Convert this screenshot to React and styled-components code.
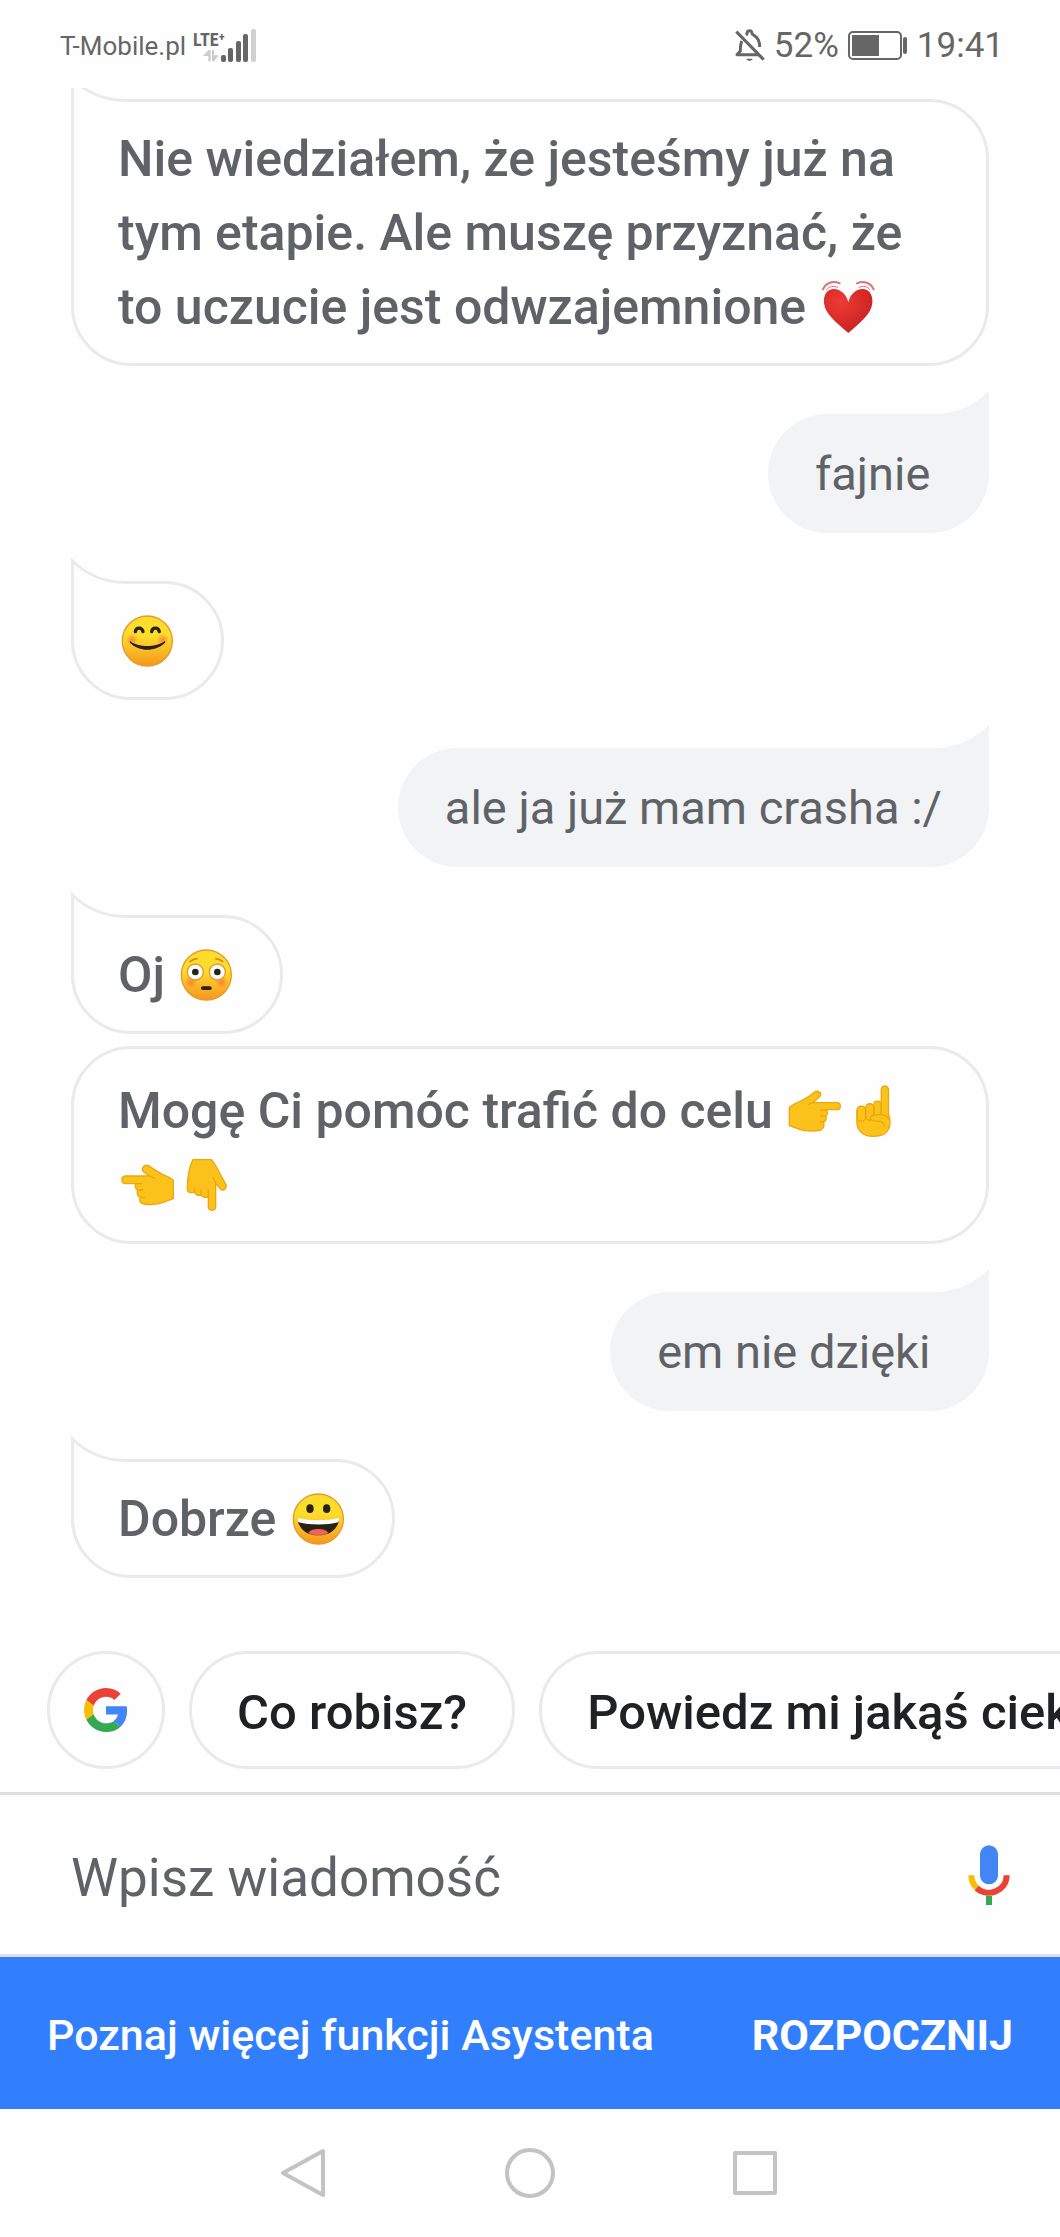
import React from 'react'
import styled, {createGlobalStyle, css} from 'styled-components'

const colors = {
	base: '#fefefe',
	text: '#5f6368',
	strong: '#202124',
	line: '#e8eaed',
	divider: '#dfdfdf',
	sent: '#f1f3f4',
	accent: '#317ffc',
	status: '#666',
	nav: '#c3c3c3',
}

const GlobalStyle = createGlobalStyle`
	* {
		box-sizing: border-box;
	}
	body {
		margin: 0;
		background: ${colors.base};
		font-family: Roboto, 'Liberation Sans', sans-serif;
	}
	button, input {
		font-family: inherit;
	}
`

const Page = styled.div`
	display: flex;
	flex-direction: column;
	min-height: 100vh;
	overflow: hidden;
	color: ${colors.text};
`

/* status bar */

const StatusBar = styled.header`
	display: flex;
	justify-content: space-between;
	height: 88px;
	padding: 0 56px 0 60px;
	color: ${colors.status};
`

const StatusGroup = styled.div`
	display: flex;
	align-items: center;
	gap: ${({$tight}) => ($tight ? '7px' : '9px')};
	font-size: ${({$tight}) => ($tight ? '26px' : '35px')};
	padding-top: 3px;
`

const Network = styled.div`
	display: flex;
	align-items: flex-end;
`

const NetworkType = styled.div`
	display: flex;
	flex-direction: column;
	align-items: flex-end;
	margin-right: -4px;
	font-family: 'Liberation Sans Narrow', 'Roboto Condensed', Roboto, sans-serif;
	font-size: 18px;
	font-weight: 700;
	line-height: 20px;
`

/* conversation */

const Thread = styled.main`
	flex: 1;
	display: flex;
	flex-direction: column;
	align-items: flex-start;
	gap: 48px;
	padding: 11px 71px 0;
	overflow: hidden;
`

const Turn = styled.section`
	display: flex;
	flex-direction: column;
	align-items: ${({$sent}) => ($sent ? 'flex-end' : 'flex-start')};
	align-self: stretch;
	gap: 12px;
`

const receivedStyle = css`
	border: 3px solid ${colors.line};
	border-radius: ${({$tail}) => ($tail ? '0 60px 60px 60px' : '60px')};
	padding: ${({$tail}) => ($tail ? '20px 44px 19px' : '25px 44px 19px')};
	font-size: 50px;
	font-weight: 500;
`

const sentStyle = css`
	background: ${colors.sent};
	border-radius: 60px 0 60px 60px;
	padding: 23px 47px 22px;
	font-size: 47px;
`

const Bubble = styled.div`
	position: relative;
	line-height: 74px;
	white-space: pre-wrap;
	${({$sent}) => ($sent ? sentStyle : receivedStyle)}
`

const Tail = styled.svg`
	position: absolute;
	top: ${({$sent}) => ($sent ? '-23px' : '-27px')};
	${({$sent}) => ($sent ? 'right: 0;' : 'left: -3px;')}
`

const EmojiSvg = styled.svg`
	display: inline-block;
	width: 53px;
	height: 52px;
	margin: 0 3px;
	vertical-align: -9px;
`

/* suggestions */

const Suggestions = styled.div`
	display: flex;
	gap: 24px;
	padding: 0 47px 23px;
	overflow: hidden;
`

const Chip = styled.button`
	flex: none;
	height: 118px;
	min-width: 118px;
	padding: ${({$icon}) => ($icon ? '0' : '4px 45px 0')};
	display: flex;
	align-items: center;
	justify-content: center;
	border: 3px solid ${colors.line};
	border-radius: 59px;
	background: none;
	color: ${colors.strong};
	font-size: 49px;
	font-weight: 500;
	white-space: nowrap;
`

/* message box */

const Composer = styled.form`
	display: flex;
	align-items: center;
	height: 165px;
	padding: 0 50px 0 71px;
	border-top: 3px solid ${colors.divider};
	border-bottom: 3px solid ${colors.divider};
`

const MessageInput = styled.input`
	flex: 1;
	min-width: 0;
	padding: 6px 0 0;
	border: 0;
	outline: 0;
	background: none;
	font-size: 53px;
	color: ${colors.strong};
	&::placeholder {
		color: ${colors.text};
		opacity: 1;
	}
`

const IconButton = styled.button`
	display: flex;
	padding: 0;
	border: 0;
	background: none;
`

const Banner = styled.aside`
	display: flex;
	align-items: center;
	justify-content: space-between;
	height: 152px;
	padding: 4px 47px 0;
	background: ${colors.accent};
	color: #fff;
	font-size: 43px;
	font-weight: 500;
`

const BannerAction = styled.button`
	padding: 0;
	border: 0;
	background: none;
	color: inherit;
	font-size: 43px;
	font-weight: 700;
`

const NavBar = styled.nav`
	display: flex;
	align-items: center;
	justify-content: center;
	gap: 175px;
	height: 128px;
`

const NotificationsOff = () => (
	<svg width="30" height="33" viewBox="0 0 90 99" fill="none" stroke={colors.status} strokeWidth="9">
		<path d="M4 8L86 92" />
		<path d="M20 36c-3 8-4 18-4 30L6 77h66" strokeLinejoin="round" />
		<path d="M33 18c3-2 4-4 4-8 1-6 12-6 13 0 0 5 2 6 7 9 13 7 17 18 17 35" />
		<path d="M34 89c3 8 16 8 19 0z" fill={colors.status} stroke="none" />
	</svg>
)

const Battery = () => (
	<svg width="60" height="30" viewBox="0 0 60 30">
		<rect x="1" y="1" width="52" height="27" rx="4" fill="none" stroke={colors.status} strokeWidth="2" />
		<rect x="4" y="4" width="27" height="21" fill={colors.status} />
		<rect x="55" y="6" width="4" height="17" rx="2" fill={colors.status} />
	</svg>
)

const bars = [[0, 26], [7, 19], [15, 12], [22, 5], [30, 0]]

const Signal = () => (
	<svg width="35" height="33" viewBox="0 0 35 33">
		{bars.map(([x, y], i) => (
			<rect
				key={x}
				x={x}
				y={y}
				width="5"
				height={33 - y}
				rx="2"
				fill={i === 4 ? '#d0d0d0' : colors.status}
			/>
		))}
	</svg>
)

const DataArrows = () => (
	<svg width="22" height="12" viewBox="0 0 66 36" fill="#ccc">
		<path d="M17 0h6v34h-7V18H0z" />
		<path d="M27 0h6v16h14L33 34h-6z" />
	</svg>
)

const ReceivedTail = () => (
	<Tail width="58" height="34" viewBox="0 0 58 34">
		<path d="M1 4A76 76 0 0 0 54 25V34H1z" fill={colors.base} />
		<path
			d="M1.500 34V4A76 76 0 0 0 56 25.500"
			fill="none"
			stroke={colors.line}
			strokeWidth="3"
		/>
	</Tail>
)

const SentTail = () => (
	<Tail $sent width="56" height="24" viewBox="0 0 56 24">
		<path d="M0 23A79 79 0 0 0 56 0V24H0z" fill={colors.sent} />
	</Tail>
)

const Face = ({label, children}) => (
	<EmojiSvg viewBox="0 0 159 156" role="img" aria-label={label}>
		<defs>
			<linearGradient id="face" x1="0" y1="0" x2="0" y2="1">
				<stop offset="0.4" stopColor="#fddd2c" />
				<stop offset="1" stopColor="#f6961c" />
			</linearGradient>
			<radialGradient id="blush">
				<stop offset="0" stopColor="#f4763c" stopOpacity="0.8" />
				<stop offset="1" stopColor="#f4763c" stopOpacity="0" />
			</radialGradient>
		</defs>
		<circle cx="79" cy="78" r="75" fill="url(#face)" stroke="#e8972a" strokeWidth="4" />
		{children}
	</EmojiSvg>
)

const Blush = ({y}) => (
	<g fill="url(#blush)">
		<circle cx="33" cy={y} r="19" />
		<circle cx="125" cy={y} r="19" />
	</g>
)

const Smiling = () => (
	<Face label="😊">
		<Blush y={74} />
		<g fill="none" stroke="#2b2216" strokeWidth="10" strokeLinecap="round">
			<path d="M43 50c2-14 20-14 23 0" />
			<path d="M92 50c2-14 20-14 23 0" />
		</g>
		<path d="M27 78c24 20 80 20 104 0 2 2 2 4 0 6-26 27-78 27-103 0-2-2-2-4-1-6z" fill="#2b2216" />
	</Face>
)

const Flushed = () => (
	<Face label="😳">
		<Blush y={100} />
		<g fill="#fff" stroke="#e8972a" strokeWidth="4">
			<circle cx="46" cy="69" r="24" />
			<circle cx="112" cy="69" r="24" />
		</g>
		<g fill="#2b2216">
			<circle cx="46" cy="69" r="10" />
			<circle cx="112" cy="69" r="10" />
			<rect x="63" y="112" width="32" height="11" rx="5" />
		</g>
		<g fill="none" stroke="#d98a1c" strokeWidth="5" strokeLinecap="round">
			<path d="M30 38c5-5 11-8 21-9" />
			<path d="M128 38c-5-5-11-8-21-9" />
		</g>
	</Face>
)

const Grinning = () => (
	<Face label="😀">
		<ellipse cx="54" cy="47" rx="11" ry="13" fill="#2b2216" />
		<ellipse cx="104" cy="47" rx="11" ry="13" fill="#2b2216" />
		<path d="M17 77c40 9 84 9 124 0-2 32-28 50-62 50S19 109 17 77z" fill="#2b2216" />
		<path d="M17 75c38 9 86 9 124 0 1 5 0 9-3 13-34 9-84 9-118 0-3-4-4-8-3-13z" fill="#fff" />
		<path d="M49 120c8-16 52-16 60 0-18 9-42 9-60 0z" fill="#f0625c" />
	</Face>
)

const Heart = () => (
	<EmojiSvg viewBox="105 62 159 156" role="img" aria-label="💓">
		<defs>
			<radialGradient id="heart" cx="0.35" cy="0.3" r="0.8">
				<stop offset="0" stopColor="#ee3b35" />
				<stop offset="1" stopColor="#c4201f" />
			</radialGradient>
		</defs>
		<path
			d="M184 126c6-26 24-40 43-40 20 0 31 18 29 42-3 35-37 58-72 90-35-32-70-55-73-90-2-24 9-42 29-42 19 0 38 14 44 40z"
			fill="url(#heart)"
		/>
		<g fill="none" stroke="#dd7177" strokeWidth="6" strokeLinecap="round">
			<path d="M108 87c8-20 30-27 50-18" />
			<path d="M119 88c8-10 20-13 33-7" strokeWidth="3" />
			<path d="M260 87c-8-20-30-27-50-18" />
			<path d="M249 88c-8-10-20-13-33-7" strokeWidth="3" />
		</g>
	</EmojiSvg>
)

const Hand = ({label, viewBox, children}) => (
	<EmojiSvg
		viewBox={viewBox}
		role="img"
		aria-label={label}
		fill="#fcc21c"
		stroke="#eda60f"
		strokeWidth="4"
		strokeLinejoin="round"
		strokeLinecap="round"
	>
		{children}
	</EmojiSvg>
)

const PointRight = () => (
	<Hand label="👉" viewBox="143 105 159 156">
		<path d="M147 172l15-10c22-9 40-18 60-35 10-8 24 2 17 12l-21 19h73c12 1 12 20 0 21h-33c6 8 4 16-2 19 4 8 0 16-6 18 2 10 0 20-8 24-22 4-48 3-62-1l-33-12z" />
		<path d="M218 158l-13 5M258 180h-17M256 198h-15M250 216h-11" fill="none" />
	</Hand>
)

const PointUp = () => (
	<Hand label="☝" viewBox="321 104 159 158">
		<path d="M350 180v40c2 26 22 40 50 40 26 0 42-10 47-24 5-12 4-30 0-42l-48-12z" />
		<rect x="424" y="107" width="22" height="94" rx="11" />
		<rect x="402" y="153" width="21" height="52" rx="10" />
		<rect x="377" y="161" width="24" height="50" rx="11" />
		<rect x="351" y="168" width="25" height="46" rx="11" />
		<path d="M391 210c-6-14 12-18 26-16h26c9 10 7 36-4 46-10 8-30-2-32-20-6 2-14-2-16-10z" stroke="none" />
		<path d="M433 228c-2-10-9-14-20-14-14 0-24-4-22-11 3-9 14-9 26-9 16 0 28 6 31 16" fill="none" />
	</Hand>
)

const PointLeft = () => (
	<Hand label="👈" viewBox="182 57 159 156">
		<path d="M339 120l-17-10c-22-8-37-20-58-33-12-5-24 9-14 19l18 12h-74c-13 2-12 21 0 23h32c-2 9 0 17 6 19-4 10 0 20 8 22-4 10 0 19 10 20 18 3 40 1 56-4l33-12z" />
		<path d="M268 108l14 7M226 131h18M232 150h16M240 172h12" fill="none" />
	</Hand>
)

const PointDown = () => (
	<Hand label="👇" viewBox="358 57 159 156">
		<path d="M397 59h55c16 16 22 38 42 71 8 14-6 26-16 16l-13-17v72c-1 13-21 13-22 0v-33c-6 8-17 4-22-3-9 3-17-1-19-9-10 4-20 2-22-6 0-30 2-63 17-91z" />
		<path d="M465 129l-7-16M443 168v-20M421 165v-17M402 156v-13" fill="none" />
	</Hand>
)

const GoogleLogo = () => (
	<svg width="44" height="44" viewBox="0 0 48 48">
		<path fill="#ea4335" d="M24 9.500c3.540 0 6.710 1.220 9.210 3.600l6.850-6.850C35.900 2.380 30.470 0 24 0 14.620 0 6.510 5.380 2.560 13.220l7.980 6.190C12.430 13.720 17.740 9.500 24 9.500z" />
		<path fill="#4285f4" d="M46.980 24.550c0-1.570-.15-3.090-.38-4.550H24v9.020h12.940c-.58 2.960-2.260 5.480-4.780 7.180l7.730 6c4.510-4.180 7.090-10.360 7.090-17.650z" />
		<path fill="#fbbc05" d="M10.530 28.590c-.48-1.450-.76-2.990-.76-4.590s.27-3.140.76-4.590l-7.980-6.190C.92 16.460 0 20.120 0 24c0 3.880.92 7.540 2.560 10.780l7.970-6.190z" />
		<path fill="#34a853" d="M24 48c6.480 0 11.930-2.130 15.890-5.810l-7.730-6c-2.150 1.450-4.920 2.300-8.160 2.300-6.260 0-11.570-4.220-13.470-9.910l-7.980 6.190C6.510 42.620 14.620 48 24 48z" />
	</svg>
)

const Mic = () => (
	<svg width="42" height="60" viewBox="0 0 126 180" fill="none" strokeWidth="18">
		<rect x="36" y="1" width="54" height="117" rx="27" fill="#4285f4" />
		<path d="M10 91c0 15 6 28 16 38" stroke="#fbbc05" />
		<path d="M26 129c32 30 90 10 90-38" stroke="#ea4335" />
		<path d="M63 153v27" stroke="#34a853" />
	</svg>
)

const NavIcon = ({children}) => (
	<svg width="50" height="50" viewBox="0 0 50 50" fill="none" stroke={colors.nav} strokeWidth="4" strokeLinejoin="round">
		{children}
	</svg>
)

const Received = ({first, children}) => (
	<Bubble $tail={first}>
		{first && <ReceivedTail />}
		{children}
	</Bubble>
)

const Sent = ({children}) => (
	<Turn $sent>
		<Bubble $sent>
			<SentTail />
			{children}
		</Bubble>
	</Turn>
)

const App = () => (
	<Page>
		<GlobalStyle />
		<StatusBar>
			<StatusGroup $tight>
				<span>T-Mobile.pl</span>
				<Network>
					<NetworkType>
						<span>LTE⁺</span>
						<DataArrows />
					</NetworkType>
					<Signal />
				</Network>
			</StatusGroup>
			<StatusGroup>
				<NotificationsOff />
				<span>52%</span>
				<Battery />
				<span>19:41</span>
			</StatusGroup>
		</StatusBar>

		<Thread>
			<Turn>
				<Received first>
					{'Nie wiedziałem, że jesteśmy już na tym etapie. Ale muszę przyznać, że to uczucie jest odwzajemnione '}
					<Heart />
				</Received>
			</Turn>
			<Sent>{'fajnie '}</Sent>
			<Turn>
				<Received first>
					<Smiling />
				</Received>
			</Turn>
			<Sent>ale ja już mam crasha :/</Sent>
			<Turn>
				<Received first>
					{'Oj '}
					<Flushed />
				</Received>
				<Received>
					{'Mogę Ci pomóc trafić do celu '}
					<PointRight />
					<PointUp />
					<PointLeft />
					<PointDown />
				</Received>
			</Turn>
			<Sent>{'em nie dzięki '}</Sent>
			<Turn>
				<Received first>
					{'Dobrze '}
					<Grinning />
				</Received>
			</Turn>
		</Thread>

		<Suggestions>
			<Chip $icon aria-label="Google">
				<GoogleLogo />
			</Chip>
			<Chip>Co robisz?</Chip>
			<Chip>Powiedz mi jakąś ciekawostkę</Chip>
		</Suggestions>

		<Composer onSubmit={e => e.preventDefault()}>
			<MessageInput aria-label="Wpisz wiadomość" placeholder="Wpisz wiadomość" />
			<IconButton type="button" aria-label="Mikrofon">
				<Mic />
			</IconButton>
		</Composer>

		<Banner>
			<span>Poznaj więcej funkcji Asystenta</span>
			<BannerAction>ROZPOCZNIJ</BannerAction>
		</Banner>

		<NavBar>
			<IconButton aria-label="Wstecz">
				<NavIcon>
					<path d="M43 3v44L3 25z" />
				</NavIcon>
			</IconButton>
			<IconButton aria-label="Ekran główny">
				<NavIcon>
					<circle cx="25" cy="25" r="23" />
				</NavIcon>
			</IconButton>
			<IconButton aria-label="Ostatnie">
				<NavIcon>
					<rect x="5" y="5" width="40" height="40" />
				</NavIcon>
			</IconButton>
		</NavBar>
	</Page>
)

export default App
